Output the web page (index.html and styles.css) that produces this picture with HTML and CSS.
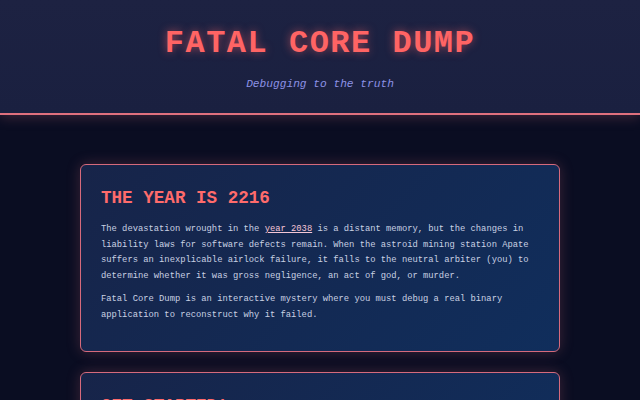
FILE: index.html
```html
<!DOCTYPE html>
<html lang="en">
<head>
<meta charset="utf-8">
<title>Fatal Core Dump</title>
<link rel="stylesheet" href="styles.css">
</head>
<body>
<header class="site-header">
  <h1 class="title">FATAL CORE DUMP</h1>
  <p class="tagline">Debugging to the truth</p>
</header>
<main class="content">
  <section class="card">
    <h2 class="card-title">THE YEAR IS 2216</h2>
    <p>The devastation wrought in the <a href="#" class="link">year 2038</a> is a distant memory, but the changes in liability laws for software defects remain. When the astroid mining station Apate suffers an inexplicable airlock failure, it falls to the neutral arbiter (you) to determine whether it was gross negligence, an act of god, or murder.</p>
    <p>Fatal Core Dump is an interactive mystery where you must debug a real binary application to reconstruct why it failed.</p>
  </section>
  <section class="card">
    <h2 class="card-title">GET STARTED!</h2>
    <p>Download the game and start debugging.</p>
  </section>
</main>
</body>
</html>
```
FILE: styles.css
```css
* { box-sizing: border-box; }
html, body { margin: 0; padding: 0; }
body {
  background: #0a0d22;
  color: #c9d1e3;
  font-family: "Liberation Mono", "Courier New", monospace;
}
.site-header {
  background: linear-gradient(180deg, #1d2242 0%, #1a2040 100%);
  border-bottom: 2px solid #e0707e;
  box-shadow: 0 2px 12px rgba(224, 112, 126, 0.25);
  padding: 25px 0 22px;
  text-align: center;
}
.title {
  margin: 0;
  font-size: 32px;
  line-height: 38px;
  letter-spacing: 1.5px;
  font-weight: bold;
  color: #ff6464;
  text-shadow: 0 0 8px rgba(255, 100, 100, 0.55);
}
.tagline {
  margin: 14px 0 0;
  font-size: 11.2px;
  line-height: 14px;
  font-style: italic;
  color: #8d92e6;
}
.content {
  width: 480px;
  margin: 0 auto;
  padding-top: 49px;
}
.card {
  background: linear-gradient(135deg, #172449 0%, #102e5c 100%);
  border: 1px solid #d66a7c;
  border-radius: 6px;
  box-shadow: 0 0 14px rgba(214, 106, 124, 0.25);
  padding: 22px 20px 21px;
  margin-bottom: 20px;
}
.card-title {
  margin: 0 0 13px;
  font-size: 17.6px;
  line-height: 22px;
  font-weight: bold;
  letter-spacing: 0;
  color: #ff6b6b;
}
.card p {
  margin: 0 0 7px;
  font-size: 8.8px;
  line-height: 15.7px;
}
.link {
  color: #f4c6d6;
  text-decoration: underline;
}
```
